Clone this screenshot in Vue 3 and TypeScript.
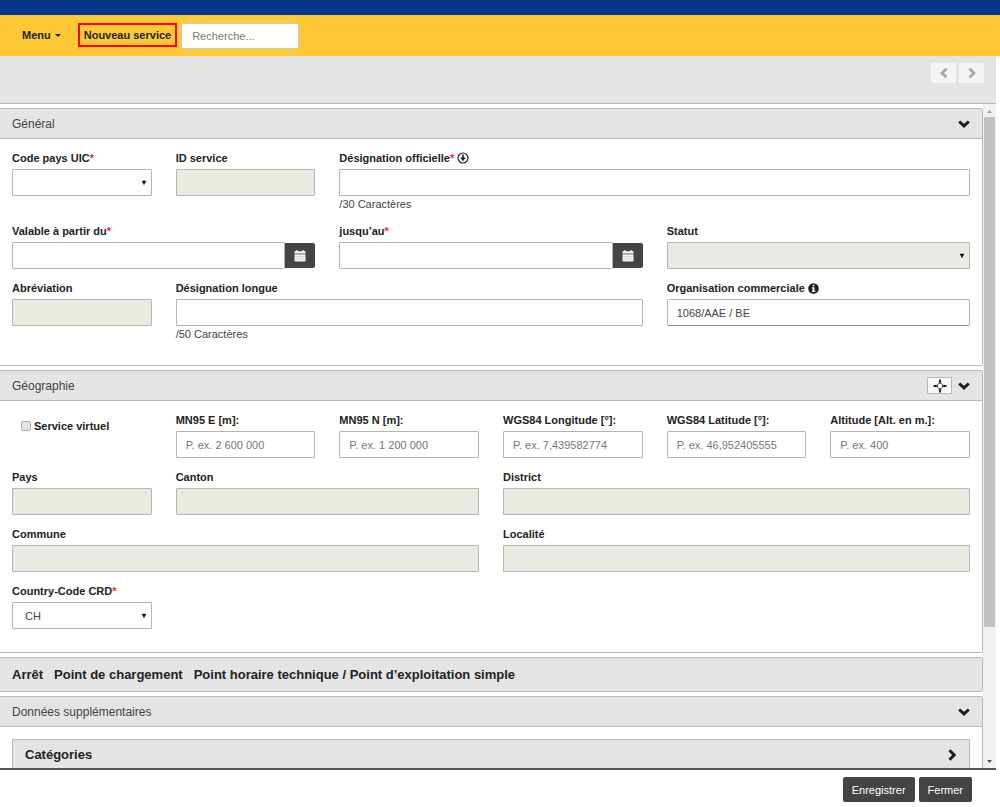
<script setup lang="ts">
import { computed, reactive, ref } from 'vue'

interface Field {
  id: string
  label: string
  kind: 'text' | 'select' | 'date' | 'check'
  start: number
  span: number
  required?: boolean
  disabled?: boolean
  placeholder?: string
  hint?: string
  icon?: 'down' | 'info'
  raised?: boolean
}

const values = reactive<Record<string, string>>({
  organisation: '1068/AAE / BE',
  countryCode: 'CH',
})
const virtualService = ref(false)
const open = reactive({ general: true, geo: true, extra: true })

const general: Field[][] = [
  [
    { id: 'uic', label: 'Code pays UIC', kind: 'select', start: 1, span: 1, required: true },
    { id: 'serviceId', label: 'ID service', kind: 'text', start: 2, span: 1, disabled: true },
    { id: 'official', label: 'Désignation officielle', kind: 'text', start: 3, span: 4, required: true, icon: 'down', hint: '/30 Caractères' },
  ],
  [
    { id: 'from', label: 'Valable à partir du', kind: 'date', start: 1, span: 2, required: true },
    { id: 'until', label: 'jusqu’au', kind: 'date', start: 3, span: 2, required: true },
    { id: 'status', label: 'Statut', kind: 'select', start: 5, span: 2, disabled: true },
  ],
  [
    { id: 'abbr', label: 'Abréviation', kind: 'text', start: 1, span: 1, disabled: true },
    { id: 'long', label: 'Désignation longue', kind: 'text', start: 2, span: 3, hint: '/50 Caractères' },
    { id: 'organisation', label: 'Organisation commerciale', kind: 'text', start: 5, span: 2, icon: 'info', raised: true },
  ],
]

const geo: Field[][] = [
  [
    { id: 'virtual', label: 'Service virtuel', kind: 'check', start: 1, span: 1 },
    { id: 'east', label: 'MN95 E [m]:', kind: 'text', start: 2, span: 1, placeholder: 'P. ex. 2 600 000' },
    { id: 'north', label: 'MN95 N [m]:', kind: 'text', start: 3, span: 1, placeholder: 'P. ex. 1 200 000' },
    { id: 'longitude', label: 'WGS84 Longitude [°]:', kind: 'text', start: 4, span: 1, placeholder: 'P. ex. 7,439582774' },
    { id: 'latitude', label: 'WGS84 Latitude [°]:', kind: 'text', start: 5, span: 1, placeholder: 'P. ex. 46,952405555' },
    { id: 'altitude', label: 'Altitude [Alt. en m.]:', kind: 'text', start: 6, span: 1, placeholder: 'P. ex. 400' },
  ],
  [
    { id: 'country', label: 'Pays', kind: 'text', start: 1, span: 1, disabled: true },
    { id: 'canton', label: 'Canton', kind: 'text', start: 2, span: 2, disabled: true },
    { id: 'district', label: 'District', kind: 'text', start: 4, span: 3, disabled: true },
  ],
  [
    { id: 'commune', label: 'Commune', kind: 'text', start: 1, span: 3, disabled: true },
    { id: 'locality', label: 'Localité', kind: 'text', start: 4, span: 3, disabled: true },
  ],
  [{ id: 'countryCode', label: 'Country-Code CRD', kind: 'select', start: 1, span: 1, required: true }],
]

const sections = computed(() => [
  { key: 'general' as const, title: 'Général', rows: general },
  { key: 'geo' as const, title: 'Géographie', rows: geo },
])

const tabs = ['Arrêt', 'Point de chargement', 'Point horaire technique / Point d’exploitation simple']
</script>

<template>
  <div class="page">
    <div class="brand"></div>
    <nav class="nav">
      <button class="nav-item" type="button">Menu <span class="caret"></span></button>
      <a class="nav-item marked" href="#">Nouveau service</a>
      <input class="search" type="text" placeholder="Recherche..." aria-label="Recherche" />
    </nav>

    <div class="frame">
      <div class="toolbar">
        <button class="step" type="button" aria-label="Précédent">
          <svg width="8" height="10" viewBox="0 0 8 10"><path d="M6.500 .8 2 5l4.500 4.200" /></svg>
        </button>
        <button class="step" type="button" aria-label="Suivant">
          <svg width="8" height="10" viewBox="0 0 8 10"><path d="M1.500 .8 6 5 1.500 9.200" /></svg>
        </button>
      </div>

      <div class="body">
        <main class="scroll">
          <section v-for="s in sections" :key="s.key" class="panel">
            <header class="panel-head">
              <h2>{{ s.title }}</h2>
              <button v-if="s.key === 'geo'" class="locate" type="button" aria-label="Localiser">
                <svg width="14" height="14" viewBox="0 0 14 14">
                  <path d="M7 .5v4.500M7 9v4.500M.5 7H5M9 7h4.500" stroke="#222" stroke-width="1.300" />
                  <path d="M7 0 8.500 3.300h-3zM7 14 5.500 10.700h3zM0 7l3.300-1.500v3zM14 7l-3.300 1.500v-3z" fill="#222" />
                  <path d="M7 3.300 10.700 7 7 10.700 3.300 7z" fill="none" stroke="#444" stroke-width=".9" />
                </svg>
              </button>
              <button class="toggle" type="button" :aria-label="s.title" :aria-expanded="open[s.key]" @click="open[s.key] = !open[s.key]">
                <svg width="12" height="8" viewBox="0 0 12 8"><path d="M1.200 1.500 6 5.900l4.800-4.400" /></svg>
              </button>
            </header>
            <div v-if="open[s.key]" class="panel-body">
              <div v-for="(row, i) in s.rows" :key="i" class="row">
                <div
                  v-for="f in row"
                  :key="f.id"
                  :class="['field', `start-${f.start}`, `span-${f.span}`]"
                >
                  <label v-if="f.kind === 'check'" class="check">
                    <input v-model="virtualService" type="checkbox" />{{ f.label }}
                  </label>
                  <template v-else>
                    <label class="label" :for="f.id">
                      <span>{{ f.label }}<span v-if="f.required" class="star">*</span></span>
                      <svg v-if="f.icon === 'down'" width="12" height="12" viewBox="0 0 12 12">
                        <circle cx="6" cy="6" r="5" fill="none" stroke="#222" stroke-width="1.200" />
                        <path d="M6 2.500v4" stroke="#222" stroke-width="1.600" />
                        <path d="M3.200 5.500h5.600L6 9.200z" fill="#222" />
                      </svg>
                      <svg v-if="f.icon === 'info'" width="11" height="11" viewBox="0 0 11 11">
                        <circle cx="5.500" cy="5.500" r="5.300" fill="#1c1c1c" />
                        <path d="M4.600 1.700h1.900v1.600H4.600zM3.900 4.300h2.600v3.500h.8v1.200H3.800V7.800h.8V5.500h-.7z" fill="#fff" />
                      </svg>
                    </label>
                    <div v-if="f.kind === 'select'" class="select">
                      <select :id="f.id" v-model="values[f.id]" :disabled="f.disabled">
                        <option v-if="f.id === 'countryCode'">CH</option>
                      </select>
                      <svg width="6" height="6" viewBox="0 0 6 6"><path d="M.7.8h4.600L3 5.300z" fill="#111" /></svg>
                    </div>
                    <div v-else-if="f.kind === 'date'" class="date">
                      <input :id="f.id" v-model="values[f.id]" type="text" />
                      <button type="button" :aria-label="`Calendrier ${f.label}`">
                        <svg width="12" height="12" viewBox="0 0 12 12">
                          <path d="M.5 1.200h1.300V.3h1.700v.9h5V.3h1.700v.9h1.300v2.300H.5z" fill="#fff" />
                          <path d="M.5 4.300h11V11.500H.5z" fill="#f0f0f0" />
                          <path d="M1.500 6.500h9M1.500 8.800h9" stroke="#b5b5b5" stroke-width=".6" stroke-dasharray="1.400 .8" />
                        </svg>
                      </button>
                    </div>
                    <input
                      v-else
                      :id="f.id"
                      v-model="values[f.id]"
                      :class="{ raised: f.raised }"
                      type="text"
                      :disabled="f.disabled"
                      :placeholder="f.placeholder"
                    />
                    <span v-if="f.hint" class="hint">{{ f.hint }}</span>
                  </template>
                </div>
              </div>
            </div>
          </section>

          <div class="panel tabs">
            <button v-for="t in tabs" :key="t" type="button">{{ t }}</button>
          </div>

          <section class="panel">
            <header class="panel-head">
              <h2>Données supplémentaires</h2>
              <button class="toggle" type="button" aria-label="Données supplémentaires" :aria-expanded="open.extra" @click="open.extra = !open.extra">
                <svg width="12" height="8" viewBox="0 0 12 8"><path d="M1.200 1.500 6 5.900l4.800-4.400" /></svg>
              </button>
            </header>
            <div v-if="open.extra" class="panel-body nested">
              <button class="category" type="button">
                <span>Catégories</span>
                <svg width="8" height="12" viewBox="0 0 8 12"><path d="M1.500 1.200 6.200 6l-4.700 4.800" /></svg>
              </button>
            </div>
          </section>
        </main>
        <div class="bar" aria-hidden="true">
          <svg width="13" height="13" viewBox="0 0 13 13"><path d="M4 9h5L6.500 6z" fill="#a3a3a3" /></svg>
          <div class="track"><div class="thumb"></div></div>
          <svg width="13" height="13" viewBox="0 0 13 13"><path d="M4 5h5L6.500 8z" fill="#505050" /></svg>
        </div>
      </div>

      <footer class="footer">
        <button type="button">Enregistrer</button>
        <button type="button">Fermer</button>
      </footer>
    </div>
  </div>
</template>

<style>
html,
body {
  margin: 0;
  background: #fff;
}
</style>

<style scoped>
.page,
.page * {
  box-sizing: border-box;
}
.page {
  display: flex;
  flex-direction: column;
  height: 100vh;
  overflow: hidden;
  color: #222;
  font: 11px/16px 'Liberation Sans', Arial, sans-serif;
}
button,
input,
select {
  margin: 0;
  font: inherit;
  color: inherit;
}
button {
  padding: 0;
  border: 0;
  background: none;
  cursor: pointer;
}
svg {
  display: block;
  flex: none;
}
.brand {
  flex: none;
  height: 15px;
  background: #04338a;
}
.nav {
  display: flex;
  flex: none;
  align-items: flex-start;
  height: 41px;
  padding: 8px 22px;
  background: #ffc935;
}
.nav-item {
  display: flex;
  align-items: center;
  height: 24px;
  margin-right: 17px;
  color: #222;
  font-weight: bold;
  text-decoration: none;
}
.caret {
  margin-left: 4px;
  border: 3px solid transparent;
  border-top-color: #222;
  border-bottom: 0;
}
.marked {
  margin-right: 4px;
  padding: 0 4px;
  border: 2px solid #f00;
}
.search {
  width: 118px;
  height: 26px;
  padding: 0 10px;
  border: 1px solid #ccc;
  border-radius: 2px;
  background: #fff;
}
.search::placeholder,
.field input::placeholder {
  color: #777;
  opacity: 1;
}
.frame {
  display: flex;
  flex: 1;
  flex-direction: column;
  min-height: 0;
  margin-right: 4px;
}
.toolbar {
  display: flex;
  flex: none;
  gap: 3px;
  justify-content: flex-end;
  height: 48px;
  padding: 7px 12px 0;
  border-bottom: 1px solid #b5b5b5;
  background: #e4e4e4;
}
.step {
  display: flex;
  align-items: center;
  justify-content: center;
  width: 25px;
  height: 20px;
  border-radius: 2px;
  background: #f4f4f4;
}
.step path {
  fill: none;
  stroke: #a8a8a8;
  stroke-width: 2.800;
}
.body {
  display: flex;
  flex: 1;
  min-height: 0;
}
.scroll {
  display: flex;
  flex: 1;
  flex-direction: column;
  gap: 4px;
  min-width: 0;
  padding-top: 4px;
  overflow-y: auto;
  scrollbar-width: none;
}
.panel {
  flex: none;
  border: solid #b9b9b9;
  border-width: 1px 1px 1px 0;
  border-radius: 0 2px 2px 0;
}
.panel-head {
  display: flex;
  align-items: center;
  height: 30px;
  padding: 0 12px;
  border-bottom: 1px solid #b9b9b9;
  background: #e4e4e4;
}
.panel-head h2 {
  flex: 1;
  margin: 0;
  color: #444;
  font-size: 12px;
  font-weight: normal;
}
.toggle path,
.category path {
  fill: none;
  stroke: #1c1c1c;
  stroke-width: 3;
}
.locate {
  display: flex;
  align-items: center;
  justify-content: center;
  width: 25px;
  height: 17px;
  margin-right: 6px;
  border: 1px solid #b9b9b9;
  background: #f8f8f8;
}
.panel-body {
  padding: 11px 12px 23px;
}
.panel-body.nested {
  padding-top: 12px;
}
.row {
  display: grid;
  grid-template-columns: repeat(6, minmax(0, 1fr));
  column-gap: 24px;
}
.row + .row {
  margin-top: 11px;
}
.field {
  display: flex;
  flex-direction: column;
}
.start-1 { grid-column-start: 1; }
.start-2 { grid-column-start: 2; }
.start-3 { grid-column-start: 3; }
.start-4 { grid-column-start: 4; }
.start-5 { grid-column-start: 5; }
.start-6 { grid-column-start: 6; }
.span-1 { grid-column-end: span 1; }
.span-2 { grid-column-end: span 2; }
.span-3 { grid-column-end: span 3; }
.span-4 { grid-column-end: span 4; }
.label {
  display: flex;
  gap: 3px;
  align-items: center;
  height: 16px;
  margin-bottom: 3px;
  font-weight: bold;
  white-space: nowrap;
}
.star {
  color: #f22;
}
.field input[type='text'],
.field select {
  width: 100%;
  height: 27px;
  padding: 0 9px;
  border: 1px solid #b5b5b5;
  border-radius: 1px;
  outline: 0;
  background: #fff;
  color: #444;
}
.field input:disabled,
.field select:disabled {
  background: #eaeae2;
  opacity: 1;
}
.field input.raised {
  border-bottom-color: #8c8c8c;
  border-radius: 2px;
}
.select {
  display: grid;
  align-items: center;
}
.select select,
.select svg {
  grid-area: 1 / 1;
}
.field select {
  padding: 0 12px;
  appearance: none;
}
.select svg {
  justify-self: end;
  margin-right: 5px;
  pointer-events: none;
}
.date {
  display: flex;
  align-items: center;
}
.date button {
  display: flex;
  flex: none;
  align-items: center;
  justify-content: center;
  width: 30px;
  height: 25px;
  border-radius: 0 2px 2px 0;
  background: #444;
}
.hint {
  color: #444;
}
.check {
  display: flex;
  align-items: center;
  height: 28px;
  padding-left: 9px;
  font-weight: bold;
}
.check input {
  width: 10px;
  height: 10px;
  margin-right: 3px;
  border: 1px solid #aaa;
  border-radius: 2px;
  background: #e4e4e4;
  appearance: none;
}
.check input:checked {
  background: #444;
}
.tabs {
  display: flex;
  gap: 11px;
  height: 35px;
  padding: 0 12px;
  background: #e4e4e4;
}
.tabs button {
  font-size: 13px;
  font-weight: bold;
}
.category {
  display: flex;
  align-items: center;
  justify-content: space-between;
  width: 100%;
  height: 31px;
  padding: 0 13px 0 12px;
  border: 1px solid #b9b9b9;
  background: #e4e4e4;
  font-size: 13px;
  font-weight: bold;
}
.bar {
  display: flex;
  flex: none;
  flex-direction: column;
  width: 13px;
  background: #f1f1f1;
}
.track {
  flex: 1;
  padding: 0 1px;
}
.thumb {
  height: 80%;
  background: #c1c1c1;
}
.footer {
  display: flex;
  flex: none;
  gap: 4px;
  justify-content: flex-end;
  height: 39px;
  padding: 7px 24px 0;
  border-top: 2px solid #555;
}
.footer button {
  height: 25px;
  padding: 0 9px;
  border-radius: 2px;
  background: #444;
  color: #fff;
}
</style>
